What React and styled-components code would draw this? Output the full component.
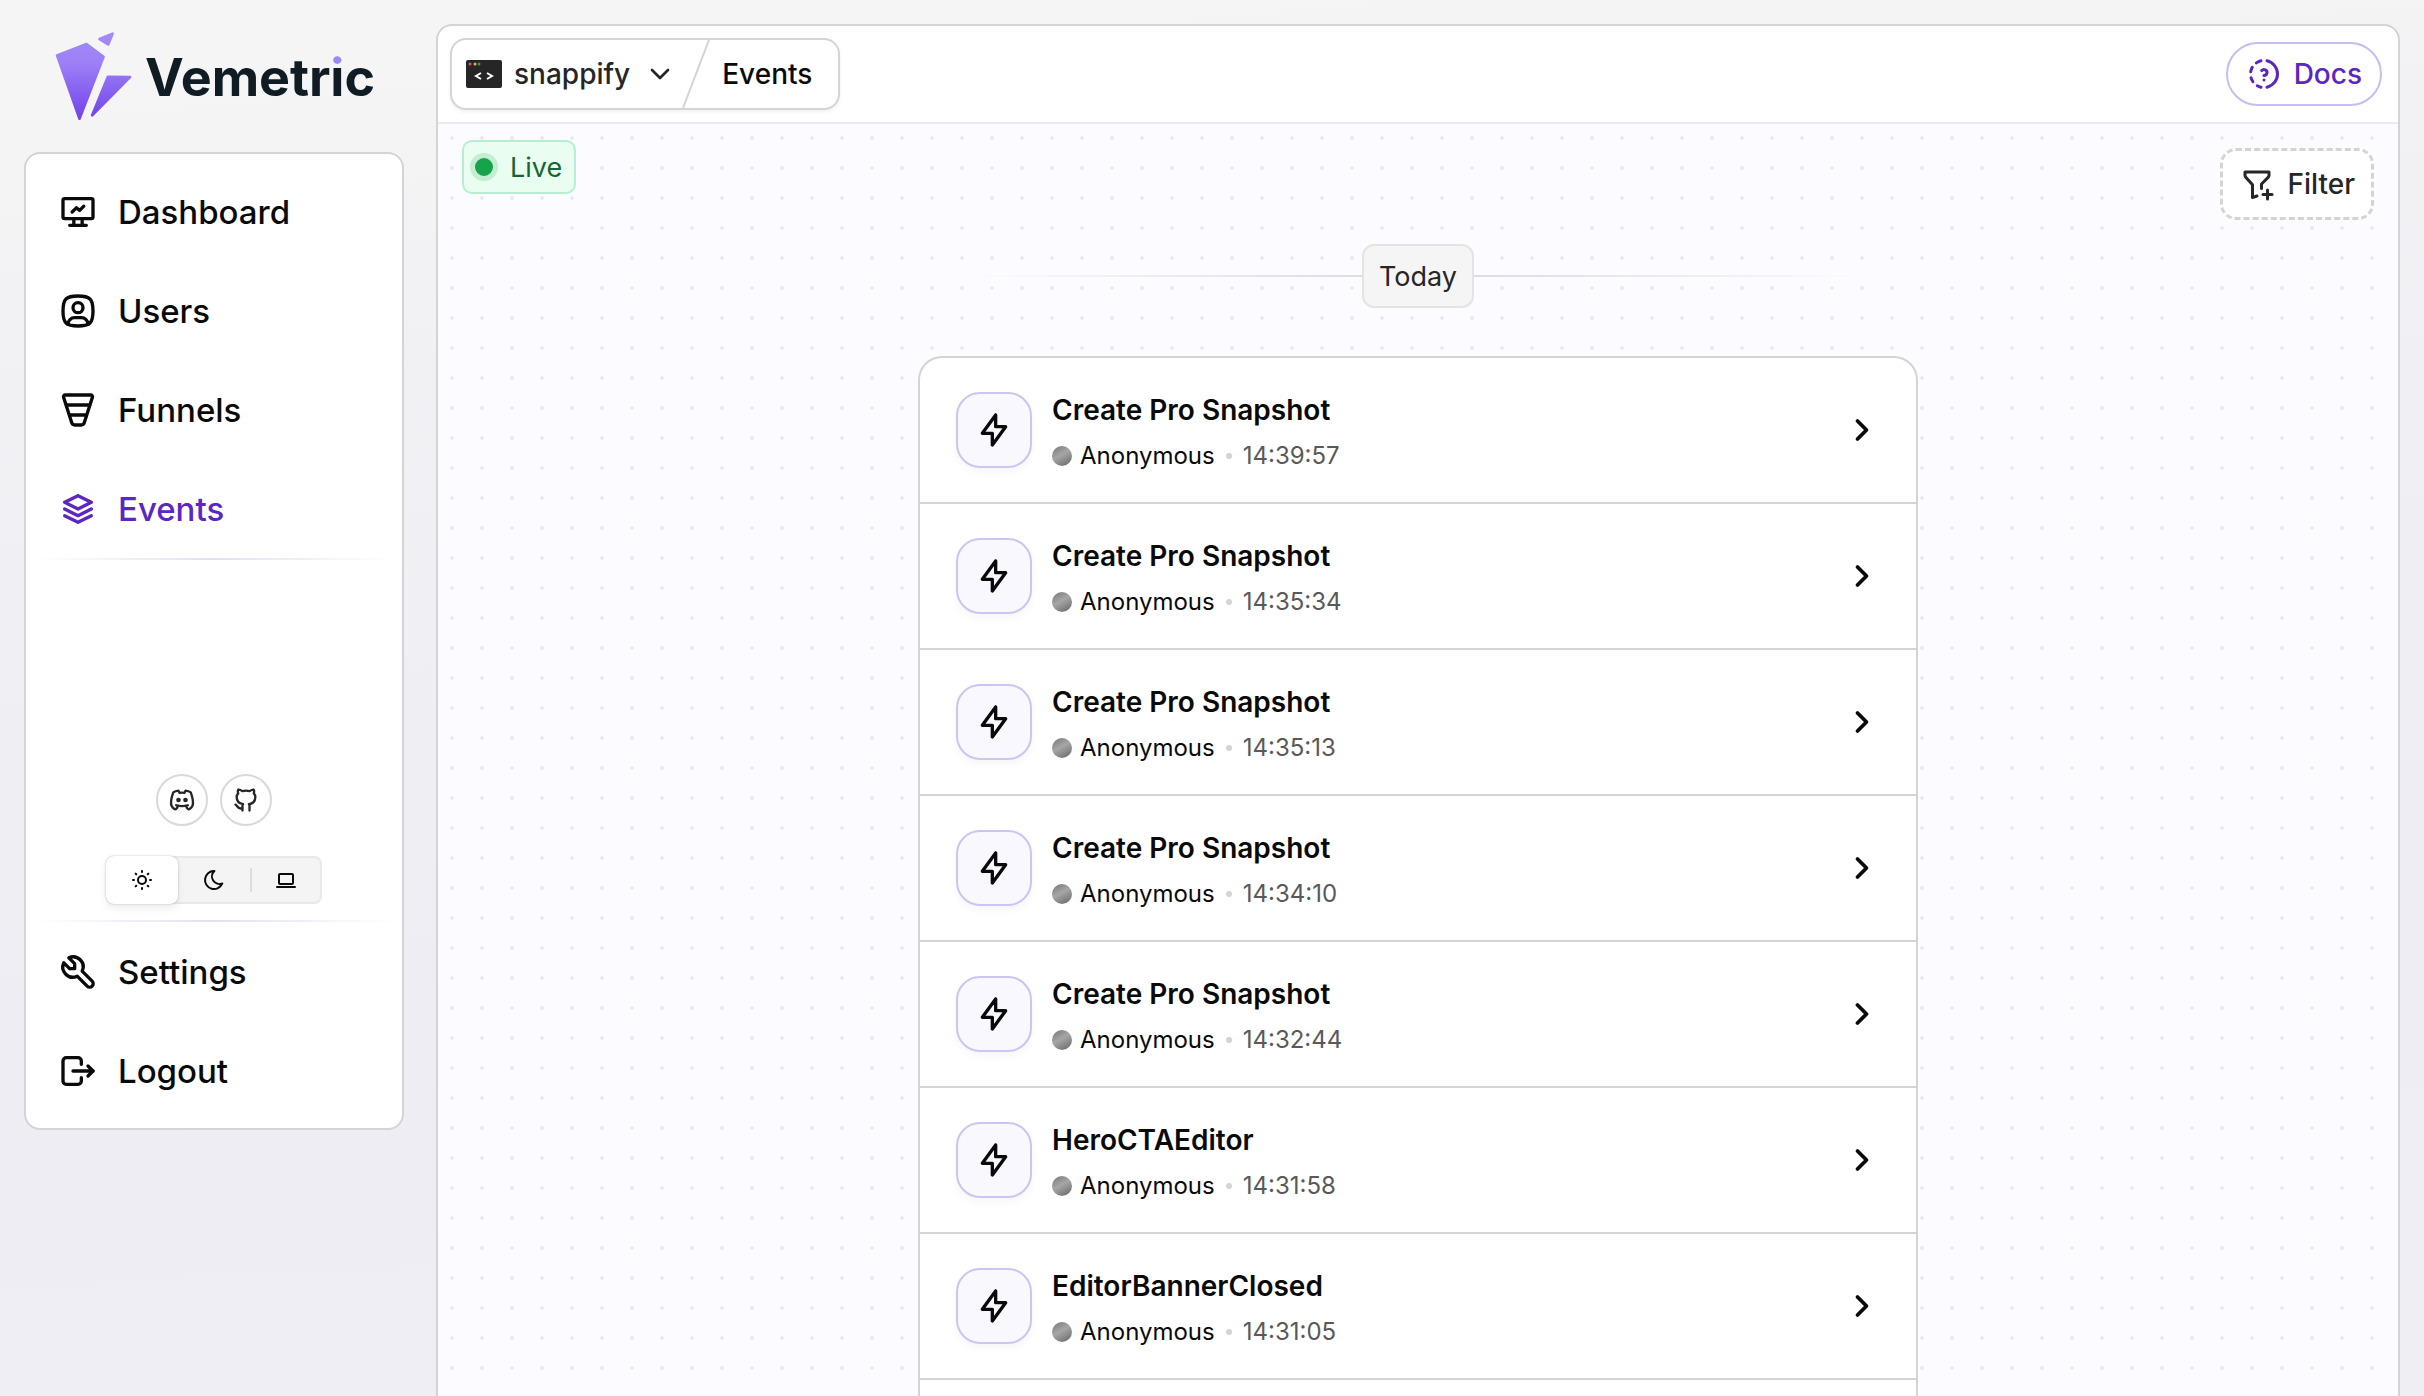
import React, { useState } from "react";
import styled, { createGlobalStyle, css } from "styled-components";
import {
  TbBolt,
  TbBrandDiscord,
  TbBrandGithub,
  TbChevronDown,
  TbChevronRight,
  TbDeviceLaptop,
  TbFilterPlus,
  TbLogout,
  TbMoon,
  TbProgressHelp,
  TbStack2,
  TbSun,
  TbTool,
  TbUserSquareRounded,
} from "react-icons/tb";

const events = [
  { name: "Create Pro Snapshot", time: "14:39:57" },
  { name: "Create Pro Snapshot", time: "14:35:34" },
  { name: "Create Pro Snapshot", time: "14:35:13" },
  { name: "Create Pro Snapshot", time: "14:34:10" },
  { name: "Create Pro Snapshot", time: "14:32:44" },
  { name: "HeroCTAEditor", time: "14:31:58" },
  { name: "EditorBannerClosed", time: "14:31:05" },
];

const themes = [
  { value: "light", label: "Light", icon: <TbSun size={24} /> },
  { value: "dark", label: "Dark", icon: <TbMoon size={24} /> },
  { value: "system", label: "System", icon: <TbDeviceLaptop size={24} /> },
];

const IconBase = ({ children }) => (
  <svg
    width="40"
    height="40"
    viewBox="0 0 24 24"
    fill="none"
    stroke="currentColor"
    strokeWidth="2"
    strokeLinecap="round"
    strokeLinejoin="round"
    aria-hidden="true"
  >
    {children}
  </svg>
);

const DashboardIcon = () => (
  <IconBase>
    <rect x="3" y="4" width="18" height="12" rx="1" />
    <path d="M7 20h10M9.5 16v4M14.5 16v4M8.5 12l2.5 -2.5l2 1.5l2.5 -2.5" />
  </IconBase>
);

const FunnelIcon = () => (
  <IconBase>
    <path d="M4.3 3h15.4a1 1 0 0 1 .95 1.3l-4.9 15.4a1.9 1.9 0 0 1 -1.8 1.3h-3.9a1.9 1.9 0 0 1 -1.8 -1.3l-4.9 -15.4a1 1 0 0 1 .95 -1.3z" />
    <path d="M5 9h14M7 15h10" />
  </IconBase>
);

const LogoMark = () => (
  <svg width="79" height="91" viewBox="160 92 236 272" aria-hidden="true">
    <defs>
      <linearGradient
        id="mark"
        gradientUnits="userSpaceOnUse"
        x1="0"
        y1="96"
        x2="0"
        y2="360"
      >
        <stop offset="0" stopColor="#a38bf5" />
        <stop offset="0.35" stopColor="#9c80f6" />
        <stop offset="1" stopColor="#7240ea" />
      </linearGradient>
    </defs>
    <g
      fill="url(#mark)"
      stroke="url(#mark)"
      strokeWidth="8"
      strokeLinejoin="round"
    >
      <path d="M169 165L257 131L308 169L236 354Z" />
      <path d="M321 229L387 230L274 344Z" />
      <path d="M296 116L335 100L322 132Z" />
    </g>
  </svg>
);

const ProjectIcon = () => (
  <svg width="36" height="28" viewBox="0 0 36 28" aria-hidden="true">
    <rect width="36" height="28" rx="2" fill="#262626" />
    <circle cx="4" cy="4" r="1.5" fill="#e0527a" />
    <circle cx="9" cy="4" r="1.5" fill="#e6b450" />
    <circle cx="13" cy="4" r="1.5" fill="#2f9e44" />
    <path
      d="M15 13l-5 3l5 3M21 13l5 3l-5 3"
      fill="none"
      stroke="#fff"
      strokeWidth="2"
    />
  </svg>
);

const App = () => {
  const [theme, setTheme] = useState("light");

  return (
    <>
      <GlobalStyle />
      <Shell>
        <Sidebar>
          <Brand href="#">
            <LogoMark />
            <Wordmark>
              Vemetr<span>i</span>c
            </Wordmark>
          </Brand>

          <SideCard>
            <nav>
              <NavItem href="#dashboard">
                <DashboardIcon />
                Dashboard
              </NavItem>
              <NavItem href="#users">
                <TbUserSquareRounded size={40} />
                Users
              </NavItem>
              <NavItem href="#funnels">
                <FunnelIcon />
                Funnels
              </NavItem>
              <NavItem href="#events" $active>
                <TbStack2 size={40} />
                Events
              </NavItem>
            </nav>
            <Divider />
            <SideTools>
              <Socials>
                <SocialLink href="#discord" aria-label="Discord">
                  <TbBrandDiscord size={28} />
                </SocialLink>
                <SocialLink href="#github" aria-label="GitHub">
                  <TbBrandGithub size={28} />
                </SocialLink>
              </Socials>
              <ThemeSwitch role="radiogroup" aria-label="Theme">
                {themes.map((item) => (
                  <ThemeOption key={item.value}>
                    <input
                      type="radio"
                      name="theme"
                      aria-label={item.label}
                      checked={theme === item.value}
                      onChange={() => setTheme(item.value)}
                    />
                    {item.icon}
                  </ThemeOption>
                ))}
              </ThemeSwitch>
            </SideTools>
            <Divider />
            <NavItem href="#settings">
              <TbTool size={40} />
              Settings
            </NavItem>
            <NavItem as="button" type="button">
              <TbLogout size={40} />
              Logout
            </NavItem>
          </SideCard>
        </Sidebar>

        <Main>
          <Header>
            <Breadcrumb aria-label="Breadcrumb">
              <ProjectButton type="button">
                <ProjectIcon />
                snappify
                <TbChevronDown size={32} />
              </ProjectButton>
              <Slash width="28" height="68" viewBox="0 0 28 68">
                <path d="M27 0L1 68" stroke="#d4d4d4" strokeWidth="2" />
              </Slash>
              <Crumb>Events</Crumb>
            </Breadcrumb>
            <DocsLink href="#docs">
              <TbProgressHelp size={36} />
              Docs
            </DocsLink>
          </Header>

          <Content>
            <Toolbar>
              <LiveBadge>
                <LiveDot />
                Live
              </LiveBadge>
              <FilterButton type="button">
                <TbFilterPlus size={36} />
                Filter
              </FilterButton>
            </Toolbar>

            <Feed>
              <DayRow>
                <Day>Today</Day>
              </DayRow>
              <EventList>
                {events.map((item) => (
                  <li key={item.time}>
                    <EventRow type="button">
                      <EventIcon>
                        <TbBolt size={40} />
                      </EventIcon>
                      <EventText>
                        <EventName>{item.name}</EventName>
                        <EventMeta>
                          <Avatar />
                          Anonymous
                          <Bullet />
                          <time>{item.time}</time>
                        </EventMeta>
                      </EventText>
                      <TbChevronRight size={36} strokeWidth={2.5} />
                    </EventRow>
                  </li>
                ))}
              </EventList>
            </Feed>
          </Content>
        </Main>
      </Shell>
    </>
  );
};

const GlobalStyle = createGlobalStyle`
  * {
    box-sizing: border-box;
  }
  body {
    margin: 0;
    font-family: Inter, "Liberation Sans", sans-serif;
    color: #0a0a0a;
    background: #f4f4f5;
  }
  button {
    font: inherit;
    color: inherit;
    background: none;
    border: 0;
    padding: 0;
    cursor: pointer;
  }
  a {
    color: inherit;
    text-decoration: none;
  }
  svg {
    flex-shrink: 0;
  }
`;

const Shell = styled.div`
  height: 100vh;
  overflow: hidden;
  display: flex;
  align-items: flex-start;
  gap: 32px;
  padding: 24px 24px 0;
  background: linear-gradient(175deg, #f5f5f5 5%, #f1f1f4 25%, #eeedf3 65%, #efeef3 100%);
`;

// SIDEBAR
const Sidebar = styled.aside`
  width: 380px;
  flex-shrink: 0;
`;

const Brand = styled.a`
  height: 104px;
  margin-bottom: 24px;
  padding-left: 30px;
  display: flex;
  align-items: center;
  gap: 12px;
`;

const Wordmark = styled.span`
  padding-top: 4px;
  font-size: 52px;
  font-weight: 700;
  line-height: 64px;
  color: #101c24;
  span {
    color: transparent;
    background: linear-gradient(#9f86f5 21px, #101c24 21px);
    background-clip: text;
    display: inline-block;
  }
`;

const SideCard = styled.div`
  display: flex;
  flex-direction: column;
  padding: 8px 0;
  background: #fff;
  border: 2px solid #d4d4d8;
  border-radius: 16px;
`;

const NavItem = styled.a`
  height: 99px;
  padding: 0 32px;
  display: flex;
  align-items: center;
  gap: 20px;
  font-size: 33px;
  font-weight: 500;
  color: ${({ $active }) => ($active ? "#5b27c0" : "#0a0a0a")};
`;

const Divider = styled.div`
  height: 2px;
  background: linear-gradient(90deg, transparent 2%, #e2e0f0 50%, transparent 98%);
`;

const SideTools = styled.div`
  min-height: 360px;
  display: flex;
  flex-direction: column;
  justify-content: flex-end;
  align-items: center;
  gap: 30px;
  padding: 24px 0 16px;
`;

const Socials = styled.div`
  display: flex;
  gap: 12px;
`;

const SocialLink = styled.a`
  width: 52px;
  height: 52px;
  display: grid;
  place-items: center;
  border: 2px solid #d9d9d9;
  border-radius: 50%;
  color: #262626;
`;

const ThemeSwitch = styled.div`
  display: flex;
  background: #f4f4f4;
  border-radius: 8px;
  box-shadow: inset 0 0 0 2px #e9e9e9;
`;

const ThemeOption = styled.label`
  width: 72px;
  height: 48px;
  position: relative;
  display: grid;
  place-items: center;
  border-radius: 8px;
  cursor: pointer;
  input {
    position: absolute;
    opacity: 0;
  }
  &:has(input:checked) {
    background: #fff;
    box-shadow: 0 0 2px rgba(0, 0, 0, 0.25), 0 4px 8px rgba(0, 0, 0, 0.08);
  }
  &:last-child::before {
    content: "";
    position: absolute;
    left: 0;
    width: 2px;
    height: 24px;
    background: #dcdcdc;
  }
`;

// MAIN PANEL
const Main = styled.main`
  flex: 1;
  min-width: 0;
  min-height: 100vh;
  display: flex;
  flex-direction: column;
  background: #fff;
  border: 2px solid #d4d4d4;
  border-radius: 16px;
  overflow: hidden;
`;

const Header = styled.header`
  display: flex;
  justify-content: space-between;
  align-items: center;
  padding: 12px 16px 12px 12px;
  border-bottom: 2px solid #ebe8fb;
`;

const Breadcrumb = styled.nav`
  height: 72px;
  display: flex;
  align-items: center;
  border: 2px solid #d4d4d4;
  border-radius: 16px;
  box-shadow: 0 2px 4px rgba(0, 0, 0, 0.06);
  font-size: 28px;
  font-weight: 500;
`;

const ProjectButton = styled.button`
  display: flex;
  align-items: center;
  gap: 12px;
  padding: 0 6px 0 14px;
  color: #262626;
  svg:last-child {
    margin-left: 2px;
  }
`;

const Slash = styled.svg`
  display: block;
`;

const Crumb = styled.span`
  padding: 0 26px 0 12px;
`;

const DocsLink = styled.a`
  height: 64px;
  padding: 0 18px;
  display: flex;
  align-items: center;
  gap: 12px;
  border: 2px solid #c8bdf0;
  border-radius: 32px;
  font-size: 28px;
  font-weight: 500;
  color: #5b27c0;
`;

const Content = styled.section`
  flex: 1;
  display: flex;
  flex-direction: column;
  background-color: #fcfbff;
  background-image: radial-gradient(circle, #ebeaef 2px, transparent 2px);
  background-size: 30px 30px;
  background-position: -1px -1px;
`;

const Toolbar = styled.div`
  height: 120px;
  padding: 16px 24px 0;
  display: flex;
  justify-content: space-between;
  align-items: flex-start;
`;

const controlText = css`
  display: flex;
  align-items: center;
  font-size: 28px;
  font-weight: 500;
`;

const LiveBadge = styled.div`
  ${controlText}
  height: 54px;
  gap: 12px;
  padding: 0 12px 0 6px;
  font-size: 27px;
  font-weight: 400;
  color: #166534;
  background: #e9fdf0;
  border: 2px solid #b5efcf;
  border-radius: 10px;
`;

const LiveDot = styled.span`
  width: 28px;
  height: 28px;
  background: #16a34a;
  border: 5px solid #c4edd1;
  border-radius: 50%;
`;

const FilterButton = styled.button`
  ${controlText}
  height: 72px;
  margin-top: 8px;
  gap: 12px;
  padding: 0 16px;
  color: #262626;
  background: #fff;
  border: 3px dashed #d4d4d4;
  border-radius: 16px;
`;

// EVENT FEED
const Feed = styled.div`
  width: 100%;
  max-width: 1000px;
  flex: 1;
  margin: 0 auto;
  display: flex;
  flex-direction: column;
`;

const DayRow = styled.div`
  display: flex;
  align-items: center;
  margin-bottom: 48px;
  &::before,
  &::after {
    content: "";
    flex: 1;
    height: 2px;
    background: linear-gradient(90deg, transparent 10%, #dddce3);
  }
  &::after {
    background: linear-gradient(90deg, #dddce3, transparent 90%);
  }
`;

const Day = styled.span`
  height: 64px;
  padding: 0 15px;
  display: flex;
  align-items: center;
  font-size: 27px;
  color: #262626;
  background: #f5f5f6;
  border: 2px solid #e4e4e7;
  border-radius: 12px;
`;

const EventList = styled.ul`
  flex: 1;
  margin: 0;
  padding: 0;
  list-style: none;
  background: #fff;
  border: 2px solid #d4d4d4;
  border-bottom: 0;
  border-radius: 24px 24px 0 0;
`;

const EventRow = styled.button`
  width: 100%;
  height: 146px;
  display: flex;
  align-items: center;
  gap: 20px;
  padding: 0 36px;
  text-align: left;
  border-bottom: 2px solid #d4d4d4;
`;

const EventIcon = styled.span`
  width: 76px;
  height: 76px;
  display: grid;
  place-items: center;
  background: #f9f8ff;
  border: 2px solid #cdc4f2;
  border-radius: 24px;
  box-shadow: 0 4px 8px rgba(0, 0, 0, 0.04);
`;

const EventText = styled.span`
  flex: 1;
  display: flex;
  flex-direction: column;
  gap: 10px;
  padding-top: 2px;
`;

const EventName = styled.span`
  font-size: 28px;
  font-weight: 600;
  line-height: 40px;
`;

const EventMeta = styled.span`
  display: flex;
  align-items: center;
  font-size: 24px;
  line-height: 32px;
  time {
    color: #595959;
  }
`;

const Avatar = styled.span`
  width: 20px;
  height: 20px;
  margin-right: 8px;
  border-radius: 50%;
  background: linear-gradient(150deg, #808080 10%, #a6a6a6 45%, #707070 90%);
`;

const Bullet = styled.span`
  width: 6px;
  height: 6px;
  margin: 0 11px;
  border-radius: 50%;
  background: #d4d4d4;
`;

export default App;
